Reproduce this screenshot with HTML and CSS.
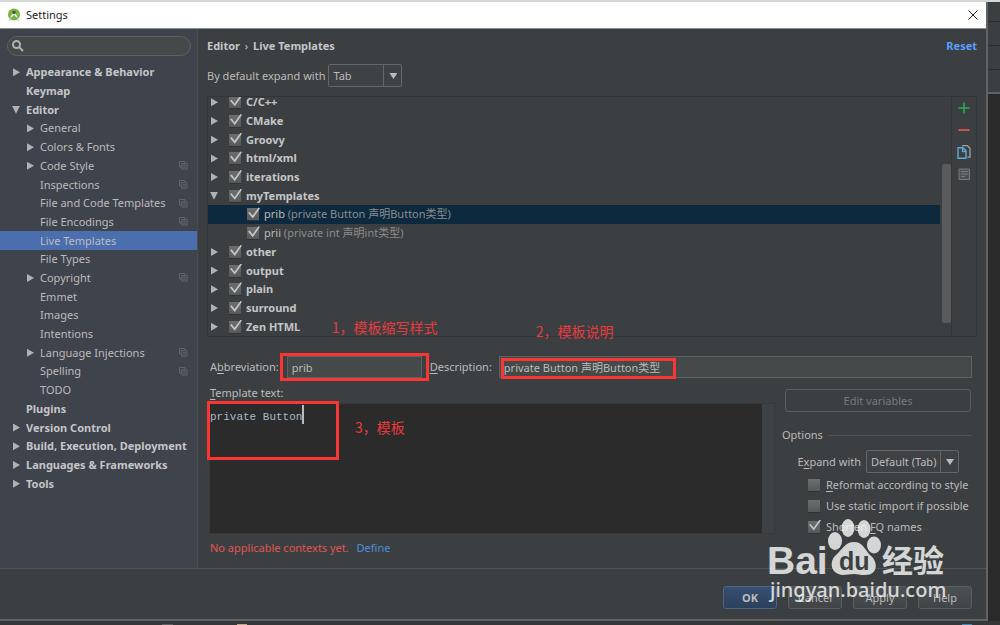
FILE: index.html
```html
<!DOCTYPE html>
<html lang="zh-CN">
<head>
<meta charset="utf-8">
<title>Settings</title>
<link rel="stylesheet" href="styles.css">
</head>
<body>
<svg class="defs" aria-hidden="true">
  <symbol id="copy" viewBox="0 0 10 10"><path d="M2.500 6.500h-2v-6h6v2M3 3h6v6H3zM4.500 5h3M4.500 7h3" fill="none" stroke="currentColor"/></symbol>
</svg>
<div class="desktop">
  <section class="window">
    <header class="titlebar">
      <svg class="logo" viewBox="0 0 14 14" aria-hidden="true"><circle cx="7" cy="6.500" r="6" fill="#7cb342"/><path d="M3 10l2.500-5h3l2.500 5-2-1-2-2-2 2z" fill="#e4ecdf"/><circle cx="7" cy="4.500" r="1.800" fill="#42603c"/><path d="M2.500 13l2-4M11.500 13l-2-4" stroke="#b8b8b8"/></svg>
      <h1>Settings</h1>
      <button class="close" aria-label="Close"><svg viewBox="0 0 10 10"><path d="M.5.5l9 9M9.500.5l-9 9" stroke="#222" fill="none"/></svg></button>
    </header>
    <div class="content">
      <nav class="sidebar" aria-label="Settings">
        <div class="search">
          <svg viewBox="0 0 12 12" aria-hidden="true"><circle cx="4.500" cy="4.500" r="3.500"/><path d="M7 7l4 4"/></svg>
          <input type="search" aria-label="Search settings">
        </div>
        <ul class="tree">
          <li class="top"><i class="arrow"></i><a href="#">Appearance &amp; Behavior</a></li>
          <li class="top"><i class="arrow none"></i><a href="#">Keymap</a></li>
          <li class="top"><i class="arrow open"></i><a href="#">Editor</a></li>
          <li><i class="arrow"></i><a href="#">General</a></li>
          <li><i class="arrow"></i><a href="#">Colors &amp; Fonts</a></li>
          <li><i class="arrow"></i><a href="#">Code Style</a><svg><use href="#copy"/></svg></li>
          <li><i class="arrow none"></i><a href="#">Inspections</a><svg><use href="#copy"/></svg></li>
          <li><i class="arrow none"></i><a href="#">File and Code Templates</a><svg><use href="#copy"/></svg></li>
          <li><i class="arrow none"></i><a href="#">File Encodings</a><svg><use href="#copy"/></svg></li>
          <li class="current"><i class="arrow none"></i><a href="#" aria-current="page">Live Templates</a></li>
          <li><i class="arrow none"></i><a href="#">File Types</a></li>
          <li><i class="arrow"></i><a href="#">Copyright</a><svg><use href="#copy"/></svg></li>
          <li><i class="arrow none"></i><a href="#">Emmet</a></li>
          <li><i class="arrow none"></i><a href="#">Images</a></li>
          <li><i class="arrow none"></i><a href="#">Intentions</a></li>
          <li><i class="arrow"></i><a href="#">Language Injections</a><svg><use href="#copy"/></svg></li>
          <li><i class="arrow none"></i><a href="#">Spelling</a><svg><use href="#copy"/></svg></li>
          <li><i class="arrow none"></i><a href="#">TODO</a></li>
          <li class="top"><i class="arrow none"></i><a href="#">Plugins</a></li>
          <li class="top"><i class="arrow"></i><a href="#">Version Control</a></li>
          <li class="top"><i class="arrow"></i><a href="#">Build, Execution, Deployment</a></li>
          <li class="top"><i class="arrow"></i><a href="#">Languages &amp; Frameworks</a></li>
          <li class="top"><i class="arrow"></i><a href="#">Tools</a></li>
        </ul>
      </nav>
      <main class="main">
        <div class="heading">
          <h2>Editor <span>›</span> Live Templates</h2>
          <a class="reset" href="#">Reset</a>
        </div>
        <div class="expand-default">
          <label for="default-key">By default expand with</label>
          <span class="select default"><select id="default-key"><option>Tab</option></select></span>
        </div>
        <div class="templates">
          <div class="viewport">
            <ul class="groups">
              <li><i class="arrow"></i><label><input type="checkbox" checked>C/C++</label></li>
              <li><i class="arrow"></i><label><input type="checkbox" checked>CMake</label></li>
              <li><i class="arrow"></i><label><input type="checkbox" checked>Groovy</label></li>
              <li><i class="arrow"></i><label><input type="checkbox" checked>html/xml</label></li>
              <li><i class="arrow"></i><label><input type="checkbox" checked>iterations</label></li>
              <li><i class="arrow open"></i><label><input type="checkbox" checked>myTemplates</label></li>
              <li class="item chosen"><label><input type="checkbox" checked>prib <small>(private Button 声明Button类型)</small></label></li>
              <li class="item"><label><input type="checkbox" checked>prii <small>(private int 声明int类型)</small></label></li>
              <li><i class="arrow"></i><label><input type="checkbox" checked>other</label></li>
              <li><i class="arrow"></i><label><input type="checkbox" checked>output</label></li>
              <li><i class="arrow"></i><label><input type="checkbox" checked>plain</label></li>
              <li><i class="arrow"></i><label><input type="checkbox" checked>surround</label></li>
              <li><i class="arrow"></i><label><input type="checkbox" checked>Zen HTML</label></li>
            </ul>
            <div class="scrollbar"></div>
          </div>
          <div class="tools">
            <button aria-label="Add"><svg viewBox="0 0 14 14"><path d="M7 1.500v11M1.500 7h11" stroke="#28b34b" stroke-width="1.500"/></svg></button>
            <button aria-label="Remove"><svg viewBox="0 0 14 14"><path d="M1.500 7h11" stroke="#c75450" stroke-width="2"/></svg></button>
            <button aria-label="Copy"><svg viewBox="0 0 14 14" fill="none"><path d="M5 .700h5.500l2.500 2.500v9h-2.500" stroke="#a0a0a0" stroke-width="1.300"/><path d="M1 2.700h5l3 3v7.600H1zM5.500 3v3.500H9" stroke="#5fa8cf" stroke-width="1.400"/></svg></button>
            <button aria-label="Restore" disabled><svg viewBox="0 0 14 14" fill="none" stroke="#77797a"><path d="M2 2h10.500v10.500H2z" fill="#505354"/><path d="M4 4.500h7M4 7h7M4 9.500h4"/></svg></button>
          </div>
        </div>
        <div class="fields">
          <label for="abbr">A<u>b</u>breviation:</label>
          <div class="abbr"><input id="abbr" type="text" value="prib"><span class="mark"></span><span class="note">1，模板缩写样式</span></div>
          <label for="desc"><u>D</u>escription:</label>
          <div class="desc"><input id="desc" type="text" value="private Button 声明Button类型"><span class="mark"></span><span class="note">2，模板说明</span></div>
        </div>
        <div class="lower">
          <div class="template">
            <label for="body"><u>T</u>emplate text:</label>
            <div class="editor"><textarea id="body" spellcheck="false">private Button</textarea><span class="caret"></span><span class="mark"></span><span class="note">3，模板</span></div>
            <p class="context">No applicable contexts yet. <a href="#">Define</a></p>
          </div>
          <div class="side">
            <button class="btn edit" disabled>Edit variables</button>
            <fieldset class="options">
              <legend>Options</legend>
              <div class="expand"><label for="key">E<u>x</u>pand with</label><span class="select"><select id="key"><option>Default (Tab)</option></select></span></div>
              <label class="check"><input type="checkbox"><span><u>R</u>eformat according to style</span></label>
              <label class="check"><input type="checkbox"><span>Use static <u>i</u>mport if possible</span></label>
              <label class="check"><input type="checkbox" checked><span>Shorten <u>F</u>Q names</span></label>
            </fieldset>
          </div>
        </div>
      </main>
    </div>
    <footer class="footer">
      <button class="btn ok">OK</button>
      <button class="btn">Cancel</button>
      <button class="btn">Apply</button>
      <button class="btn">Help</button>
    </footer>
    <svg class="watermark" viewBox="0 0 184 90" aria-label="Baidu 经验">
      <g fill="#fff">
        <text class="wm-bai" x="0" y="56">Bai</text>
        <ellipse cx="68" cy="23" rx="7" ry="9"/><ellipse cx="81" cy="10" rx="6.500" ry="9"/><ellipse cx="97" cy="11" rx="6.500" ry="9"/><ellipse cx="107" cy="27" rx="7" ry="8.500"/>
        <path d="M87 24c9 0 11 8 16 13 8 6 9 20-5 20-4 .300-7-1-11-1s-7 1-11 1c-13-1-14-14-7-20 6-5 9-13 18-13z"/>
        <text class="wm-han" x="115" y="54">经验</text>
        <text class="wm-url" x="3" y="79">jingyan.baidu.com</text>
      </g>
      <text class="wm-du" x="72" y="52">du</text>
    </svg>
  </section>
  <aside class="behind"><i></i><i></i><i></i><i></i></aside>
</div>
</body>
</html>
```
FILE: styles.css
```css
* { box-sizing: border-box; }
body {
  margin: 0;
  background: #2b2b2b;
  color: #bbbbbb;
  font: 11px/16px "Noto Sans", "Noto Sans CJK SC", sans-serif;
}
input, select, textarea, button { font: inherit; color: inherit; }
ul, h1, h2, p { margin: 0; padding: 0; list-style: none; }
a { color: inherit; text-decoration: none; }
u { text-underline-offset: 2px; }
.defs { position: absolute; width: 0; height: 0; }

.desktop {
  display: flex;
  min-height: 100vh;
  padding-bottom: 4px;
  border-top: 2px solid #d5d8d5;
  background:
    linear-gradient(#c0a983, #c0a983) 237px 100% / 10px 1px no-repeat,
    linear-gradient(#5c5e60, #5c5e60) 162px 100% / 11px 1px no-repeat,
    linear-gradient(#4187ad, #4187ad) 962px 100% / 10px 1px no-repeat,
    #353637;
}
.window {
  position: relative;
  display: flex;
  flex: 1;
  flex-direction: column;
  border: solid #616365;
  border-width: 0 2px 2px 0;
  background: #3c3f41;
}
.behind { width: 12px; background: #2a2a2a; }
.behind i { display: block; height: 24px; border-bottom: 1px solid #2a2c2d; background: #3c3f41; }
.behind i:first-child { height: 20px; }
.behind i:last-child { border-bottom: 2px solid #606365; }

.titlebar {
  display: flex;
  align-items: center;
  gap: 5px;
  height: 27px;
  padding: 0 8px 0 7px;
  border-bottom: 1px solid #8b8e90;
  background: #fff;
  color: #222;
}
.titlebar h1 { flex: 1; font-size: 11px; font-weight: 400; }
.logo { width: 14px; height: 14px; }
.close { display: flex; padding: 0; border: 0; background: none; }
.close svg { width: 10px; height: 10px; }

.content { display: flex; flex: 1; }
.sidebar { width: 198px; border-right: 1px solid #4a4d50; background: #3f434c; }
.search {
  display: flex;
  align-items: center;
  margin: 7px 6px 7px 7px;
  height: 20px;
  padding: 0 4px;
  border: 1px solid #5e6162;
  border-radius: 10px;
  background: #45494a;
}
.search svg { width: 12px; height: 12px; fill: none; stroke: #b0b2b3; stroke-width: 2; }
.search input { flex: 1; min-width: 0; border: 0; outline: 0; background: none; }

.tree, .groups { display: grid; grid-auto-rows: 1fr; }
.tree { min-height: 430px; }
.tree li { display: flex; align-items: center; padding: 0 9px 0 26px; }
.tree .top { padding-left: 12px; color: #c4c6c8; font-weight: 700; }
.tree a { flex: 1; }
.tree svg { width: 9px; height: 9px; color: #666a6f; }
.tree .current { background: #4b6eaf; }
.arrow { width: 14px; height: 8px; flex: none; }
.arrow::before {
  content: "";
  display: block;
  width: 7px;
  height: 8px;
  margin-left: 1px;
  background: #afb1b3;
  clip-path: polygon(0 0, 100% 50%, 0 100%);
}
.arrow.open::before { width: 8px; margin-left: 0; clip-path: polygon(0 0, 100% 0, 50% 100%); }
.arrow.none::before { display: none; }

.main { display: flex; flex: 1; flex-direction: column; min-width: 0; padding: 9px 9px 0; }
.heading { display: flex; justify-content: space-between; }
.heading h2 { font-size: 11px; font-weight: 700; color: #c4c6c8; }
.heading span { margin: 0 2px; font-weight: 400; }
.reset { font-weight: 700; color: #589df6; }
.expand-default { display: flex; align-items: center; gap: 3px; margin-top: 10px; }
.select { position: relative; display: flex; }
.select select {
  width: 93px;
  height: 23px;
  padding: 0 18px 0 4px;
  border: 1px solid #646769;
  border-radius: 2px;
  background: #3f4244;
  appearance: none;
}
.default select { width: 74px; }
.select::after {
  content: "";
  position: absolute;
  top: 9px;
  right: 5px;
  width: 8px;
  height: 6px;
  background: #bbb;
  clip-path: polygon(0 0, 100% 0, 50% 100%);
  pointer-events: none;
}
.select::before {
  content: "";
  position: absolute;
  top: 0;
  bottom: 0;
  right: 18px;
  border-left: 1px solid #646769;
}

.templates { display: flex; height: 241px; margin-top: 9px; border: 1px solid #333638; }
.viewport { position: relative; flex: 1; overflow: hidden; }
.groups { min-height: 243px; margin: -4px 11px 0 0; }
.groups li { display: flex; align-items: center; padding-left: 2px; color: #c4c6c8; font-weight: 700; }
.groups label { display: flex; align-items: center; padding-left: 5px; white-space: pre; }
.groups .item { padding-left: 34px; color: #bbb; font-weight: 400; }
.groups small { font-size: 11px; color: #8a8c8d; }
.groups .chosen { background: #0d293e; }
.scrollbar { position: absolute; top: 67px; right: 0; width: 9px; height: 159px; border-radius: 2px; background: #595b5c; }
input[type="checkbox"] {
  position: relative;
  width: 12px;
  height: 12px;
  margin: 0;
  flex: none;
  background: linear-gradient(#6c6e6f, #56595a);
  box-shadow: 0 1px 0 #303233;
  appearance: none;
}
.groups input { margin-right: 5px; }
input[type="checkbox"]:checked::before {
  content: "";
  position: absolute;
  top: -1px;
  left: 1px;
  width: 12px;
  height: 11px;
  background: #c4c4c4;
  clip-path: polygon(0 48%, 14% 40%, 38% 74%, 88% 0, 100% 6%, 40% 100%);
}
.tools { display: flex; flex-direction: column; align-items: center; gap: 8px; width: 25px; padding-top: 4px; border-left: 1px solid #333638; }
.tools button { display: flex; padding: 0; border: 0; background: none; }
.tools svg { width: 14px; height: 14px; }

.fields { display: flex; align-items: center; margin: 19px 5px 0 3px; }
.fields input {
  width: 100%;
  height: 22px;
  padding: 0 4px;
  border: 1px solid #5f6263;
  background: #45494a;
}
.abbr { position: relative; width: 135px; margin: 0 8px; }
.desc { position: relative; flex: 1; margin-left: 7px; }
.mark { position: absolute; border: 3px solid #fb3434; pointer-events: none; }
.note {
  position: absolute;
  color: #e63a3c;
  font: 14px/20px "Noto Sans CJK SC", sans-serif;
  white-space: nowrap;
}
.abbr .mark { inset: -3px -7px; }
.abbr .note { left: 45px; top: -39px; }
.desc .mark { left: 2px; top: 2px; width: 175px; height: 21px; }
.desc .note { left: 37px; top: -35px; }

.lower { display: flex; gap: 8px; margin: 7px 5px 0 3px; }
.template { flex: 1; min-width: 0; }
.template > label { display: block; }
.editor { position: relative; display: flex; height: 129px; margin-top: 3px; border-right: 12px solid #3e4244; outline: 1px solid #37393b; }
.editor textarea {
  flex: 1;
  padding: 5px 0;
  border: 0;
  outline: 0;
  resize: none;
  background: #2b2b2b;
  color: #a9b7c6;
  font: 11px/16px "Liberation Mono", monospace;
}
.caret { position: absolute; left: 92px; top: 1px; width: 2px; height: 19px; background: #bbb; }
.editor .mark { left: -3px; top: -3px; width: 132px; height: 59px; }
.editor .note { left: 145px; top: 13px; }
.context { margin-top: 7px; color: #e05555; }
.context a { margin-left: 5px; color: #4f8edc; }

.side { width: 190px; }
.btn {
  min-width: 54px;
  height: 23px;
  padding: 0;
  border: 1px solid #5a5e60;
  border-radius: 3px;
  background: linear-gradient(#4b5052, #414547);
}
.edit { display: block; width: 186px; margin: 4px 0 0 3px; background: none; color: #777a7b; }
.options { display: grid; min-width: 0; margin: 15px 0 0; padding: 0; border: 0; }
.options legend { display: flex; align-items: center; gap: 5px; width: 100%; padding: 0; }
.options legend::after { content: ""; flex: 1; border-top: 1px solid #515456; }
.expand { display: flex; align-items: center; justify-content: flex-end; gap: 5px; margin: 7px 13px 1px 0; }
.check { display: flex; align-items: center; gap: 6px; height: 21px; padding-left: 26px; white-space: nowrap; }

.footer { display: flex; justify-content: flex-end; gap: 11px; padding: 17px 14px 10px; border-top: 1px solid #515456; }
.footer .ok { border-color: #4c6585; background: linear-gradient(#374f70, #2b405c); font-weight: 700; }

.watermark { position: absolute; right: 35px; bottom: 11px; width: 184px; height: 90px; opacity: .78; pointer-events: none; }
.wm-bai { font: 700 39px "Liberation Sans", sans-serif; }
.wm-du { font: 700 25px "Liberation Sans", sans-serif; fill: #3c3f41; }
.wm-han { font: 700 31px "Noto Sans CJK SC", sans-serif; }
.wm-url { font: 500 20px "Noto Sans", sans-serif; }
```
